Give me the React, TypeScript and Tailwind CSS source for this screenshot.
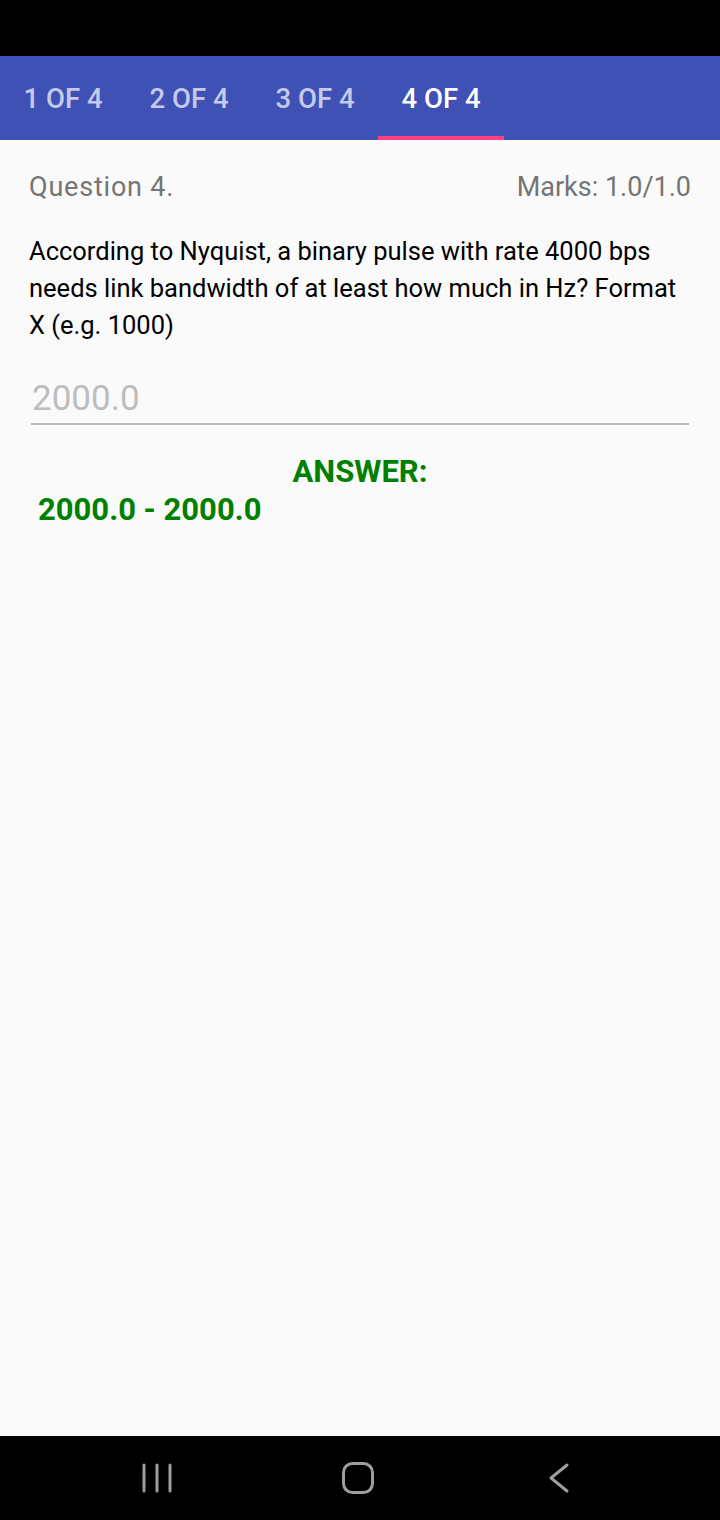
import React from "react";

const tabs = ["1 OF 4", "2 OF 4", "3 OF 4", "4 OF 4"];

export default function App() {
  return (
    <div
      className="w-[720px] h-[1520px] flex flex-col bg-[#FAFAFA]"
      style={{ fontFamily: "Roboto, 'Noto Sans', sans-serif" }}
    >
      <div className="h-[56px] bg-black" />
      <div className="h-[84px] bg-[#3F51B5] flex">
        {tabs.map((t, i) => (
          <div key={t} className="w-[126px] flex flex-col">
            <div
              className={
                "flex-1 flex items-center justify-center text-[27.5px] font-medium pt-[6px] " +
                (i === 3 ? "text-white" : "text-[#C5CAE9]")
              }
            >
              {t}
            </div>
            <div className={"h-[4px] " + (i === 3 ? "bg-[#FF4081]" : "")} />
          </div>
        ))}
      </div>

      <div className="flex-1 px-[29px] pt-[30px]">
        <div className="flex justify-between items-center text-[27px] text-[#757575] leading-[34px]">
          <span className="tracking-[0.8px]">Question 4.</span>
          <span>Marks: 1.0/1.0</span>
        </div>
        <p className="mt-[29px] text-[25.5px] leading-[37px] text-black">
          According to Nyquist, a binary pulse with rate 4000 bps needs link bandwidth of at least how much in Hz? Format X (e.g. 1000)
        </p>
        <div className="mt-[34px] ml-[2px] mr-[2px] border-b-2 border-[#BDBDBD] pb-[3px]">
          <span className="text-[35px] leading-[42px] text-[#BDBDBD] ml-[1px]">2000.0</span>
        </div>
        <div className="mt-[28px] text-center text-[31px] font-bold text-[#008000] leading-[38px]">
          ANSWER:
        </div>
        <div className="ml-[9px] text-[31px] font-bold text-[#008000] leading-[37px]">
          2000.0 - 2000.0
        </div>
      </div>

      <div className="h-[84px] bg-black flex items-center pl-[137px] gap-[161px]">
        <svg width="40" height="40" viewBox="0 0 40 40">
          <g stroke="#9E9E9E" strokeWidth="3" strokeLinecap="round">
            <line x1="7" y1="7" x2="7" y2="33" />
            <line x1="20" y1="7" x2="20" y2="33" />
            <line x1="33" y1="7" x2="33" y2="33" />
          </g>
        </svg>
        <svg width="40" height="40" viewBox="0 0 40 40">
          <rect x="5.5" y="5.5" width="29" height="29" rx="9" fill="none" stroke="#9E9E9E" strokeWidth="3" />
        </svg>
        <svg width="40" height="40" viewBox="0 0 40 40">
          <path d="M28 7 L12 20 L28 33" fill="none" stroke="#9E9E9E" strokeWidth="3" strokeLinecap="round" strokeLinejoin="round" />
        </svg>
      </div>
    </div>
  );
}
